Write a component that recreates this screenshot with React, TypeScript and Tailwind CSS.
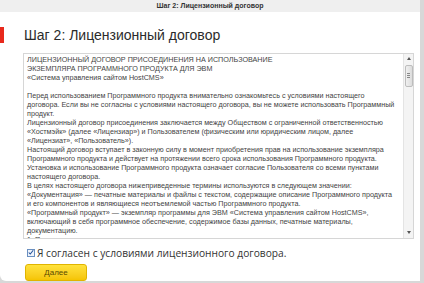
import React from 'react';

const lines: string[] = [
  'ЛИЦЕНЗИОННЫЙ ДОГОВОР ПРИСОЕДИНЕНИЯ НА ИСПОЛЬЗОВАНИЕ',
  'ЭКЗЕМПЛЯРА ПРОГРАММНОГО ПРОДУКТА ДЛЯ ЭВМ',
  '«Система управления сайтом HostCMS»',
  '',
  'Перед использованием Программного продукта внимательно ознакомьтесь с условиями настоящего',
  'договора. Если вы не согласны с условиями настоящего договора, вы не можете использовать Программный',
  'продукт.',
  'Лицензионный договор присоединения заключается между Обществом с ограниченной ответственностью',
  '«Хостмэйк» (далее «Лицензиар») и Пользователем (физическим или юридическим лицом, далее',
  '«Лицензиат», «Пользователь»).',
  'Настоящий договор вступает в законную силу в момент приобретения прав на использование экземпляра',
  'Программного продукта и действует на протяжении всего срока использования Программного продукта.',
  'Установка и использование Программного продукта означает согласие Пользователя со всеми пунктами',
  'настоящего договора.',
  'В целях настоящего договора нижеприведенные термины используются в следующем значении:',
  '«Документация» — печатные материалы и файлы с текстом, содержащие описание Программного продукта',
  'и его компонентов и являющиеся неотъемлемой частью Программного продукта.',
  '«Программный продукт» — экземпляр программы для ЭВМ «Система управления сайтом HostCMS»,',
  'включающий в себя программное обеспечение, содержимое базы данных, печатные материалы,',
  'документацию.',
  '1. Предмет договора',
];

function Scrollbar() {
  return (
    <div className="w-[10px] shrink-0 bg-[#f4f4f4] border-l border-[#e4e4e4] flex flex-col items-center">
      <div className="h-[10px] flex items-center justify-center">
        <div className="w-0 h-0 border-l-[2.5px] border-r-[2.5px] border-b-[3px] border-l-transparent border-r-transparent border-b-[#555]" />
      </div>
      <div className="w-[8px] h-[22px] mt-[1px] rounded-[2px] border border-[#bdbdbd] bg-gradient-to-r from-[#f0f0f0] to-[#dcdcdc] flex flex-col items-center justify-center gap-[1px]">
        <div className="w-[3px] h-px bg-[#888]" />
        <div className="w-[3px] h-px bg-[#888]" />
        <div className="w-[3px] h-px bg-[#888]" />
      </div>
      <div className="flex-1" />
      <div className="h-[10px] flex items-center justify-center">
        <div className="w-0 h-0 border-l-[2.5px] border-r-[2.5px] border-t-[3px] border-l-transparent border-r-transparent border-t-[#555]" />
      </div>
    </div>
  );
}

export default function App() {
  return (
    <div className="w-[424px] h-[283px] overflow-hidden bg-[#d8d8d8] font-['Liberation_Sans',Arial,sans-serif]">
      <div className="w-[420px] h-[281px] bg-white rounded-bl-[6px] flex flex-col overflow-hidden">
        <div className="h-[12px] bg-[#efefef] flex items-center justify-center text-[7px] font-bold text-[#333] leading-none">
          Шаг 2: Лицензионный договор
        </div>
        <div className="flex items-center mt-[15px] h-[16px]">
          <div className="w-[4px] h-[16px] bg-[#e8291c]" />
          <h1 className="ml-[20px] text-[14px] leading-none text-[#2b2b2b]">Шаг 2: Лицензионный договор</h1>
        </div>
        <div className="ml-[23px] mt-[10px] w-[391px] h-[186px] border border-[#d6d6d6] flex overflow-hidden">
          <div className="flex-1 pl-[3px] pt-[1px] text-[7.2px] leading-[9px] text-[#444] overflow-hidden">
            {lines.map((l, i) => (
              <div key={i} className="whitespace-nowrap h-[9px]">{l || '\u00a0'}</div>
            ))}
          </div>
          <Scrollbar />
        </div>
        <label className="ml-[27px] mt-[9px] flex items-center gap-[2px] text-[10.2px] text-[#333] font-['Open_Sans',sans-serif] leading-none">
          <span className="w-[8px] h-[8px] border border-[#6a8fc0] bg-[#eef3fb] flex items-center justify-center">
            <svg viewBox="0 0 8 8" className="w-[7px] h-[7px]">
              <path d="M1 4 L3 6 L7 1" stroke="#1f4f9a" strokeWidth="1.4" fill="none" />
            </svg>
          </span>
          Я согласен с условиями лицензионного договора.
        </label>
        <button className="ml-[25px] mt-[6px] w-[62px] h-[17px] rounded-[3px] bg-gradient-to-b from-[#ffe23a] to-[#f5c400] border border-[#e0b400] text-[8px] text-[#5a4a00] leading-none">
          Далее
        </button>
      </div>
    </div>
  );
}
